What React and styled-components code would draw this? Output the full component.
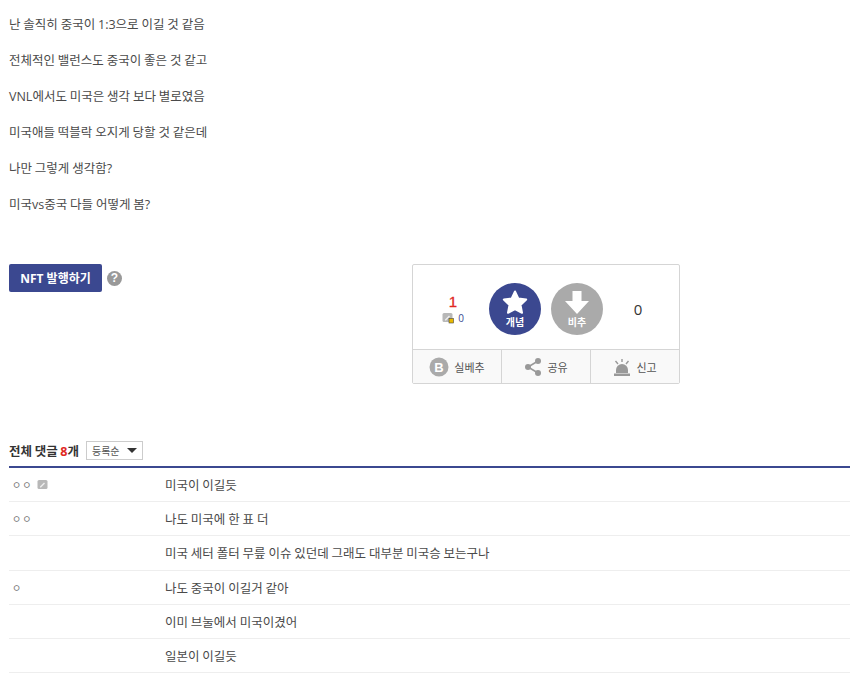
import styled, { createGlobalStyle } from "styled-components";

const GlobalStyle = createGlobalStyle`
  html, body {
    margin: 0;
    padding: 0;
    background: #fff;
    overflow: hidden;
  }
  body {
    font-family: "Open Sans", "Noto Sans CJK KR", sans-serif;
    color: #333;
  }
`;

const Page = styled.div`
  width: 850px;
  height: 674px;
  padding: 7px 0 0 9px;
  box-sizing: border-box;
  overflow: hidden;
`;

const Body = styled.div`
  height: 257px;
`;

const Line = styled.p`
  margin: 0;
  height: 36px;
  line-height: 36px;
  font-size: 12.5px;
  word-spacing: -0.4px;
  color: #4a4a4a;
`;

const Middle = styled.div`
  display: flex;
  align-items: flex-start;
  height: 170px;
`;

const NftArea = styled.div`
  display: flex;
  align-items: center;
  gap: 5px;
  width: 403px;
`;

const NftButton = styled.button`
  width: 93px;
  height: 28px;
  padding: 0;
  border: 0;
  border-radius: 2px;
  background: #3b4890;
  color: #fff;
  font: 700 12px "Open Sans", "Noto Sans CJK KR", sans-serif;
`;

const Help = styled.span`
  width: 15px;
  height: 15px;
  border-radius: 50%;
  background: #999;
  color: #fff;
  font: 700 12px/15px "Liberation Sans", sans-serif;
  text-align: center;
`;

const RecommendBox = styled.div`
  width: 268px;
  height: 120px;
  box-sizing: border-box;
  border: 1px solid #d5d5d5;
  border-radius: 2px;
  display: flex;
  flex-direction: column;
`;

const Votes = styled.div`
  flex: 1;
  display: flex;
  align-items: center;
  padding-top: 3px;
`;

const Count = styled.div`
  width: 76px;
  padding-left: 4px;
  box-sizing: border-box;
  display: flex;
  flex-direction: column;
  align-items: center;
`;

const UpNumber = styled.span`
  font: 400 15px/16px "Liberation Sans", sans-serif;
  -webkit-text-stroke: 0.3px #e0281f;
  color: #e0281f;
  margin-top: 2px;
`;

const Fixed = styled.span`
  display: flex;
  align-items: center;
  gap: 4px;
  font: 10px/14px "Open Sans", sans-serif;
  color: #3b4890;
  margin-top: 1px;
`;

const DownNumber = styled.span`
  width: 70px;
  text-align: center;
  font: 15px "Open Sans", sans-serif;
  color: #333;
`;

const VoteButton = styled.div`
  width: 52px;
  height: 52px;
  border-radius: 50%;
  background: ${(p) => p.$color};
  color: #fff;
  display: flex;
  flex-direction: column;
  align-items: center;
  margin-right: ${(p) => p.$right || 0}px;
  padding-top: 7px;
  box-sizing: border-box;
  font-size: 10px;
  font-weight: 700;
  line-height: 14px;
`;

const Tools = styled.div`
  height: 33px;
  display: flex;
  border-top: 1px solid #d5d5d5;
  background: #f9f9f9;
`;

const Tool = styled.div`
  flex: 1;
  display: flex;
  align-items: center;
  justify-content: center;
  gap: 5px;
  font-size: 11px;
  color: #555;
  padding-top: 1px;
  & + & {
    border-left: 1px solid #d5d5d5;
  }
`;

const CommentHead = styled.div`
  display: flex;
  align-items: center;
  gap: 7px;
  height: 34px;
  border-bottom: 2px solid #3b4890;
  box-sizing: border-box;
`;

const HeadTitle = styled.strong`
  font-size: 12.5px;
  word-spacing: -0.6px;
  color: #333;
  & em {
    font-style: normal;
    color: #e0281f;
  }
`;

const Sort = styled.div`
  width: 57px;
  height: 19px;
  box-sizing: border-box;
  border: 1px solid #ccc;
  display: flex;
  align-items: center;
  justify-content: space-between;
  padding: 0 5px;
  font-size: 10px;
  color: #555;
  &::after {
    content: "";
    border: 5px solid transparent;
    border-top: 5px solid #333;
    border-bottom: 0;
  }
`;

const Row = styled.div`
  display: flex;
  align-items: center;
  height: 34.2px;
  box-sizing: border-box;
  border-bottom: 1px solid #eee;
`;

const Nick = styled.div`
  width: 156px;
  padding-left: 3px;
  box-sizing: border-box;
  display: flex;
  align-items: center;
  gap: 5px;
  font-size: 10px;
  letter-spacing: 1px;
  color: #777;
`;

const Memo = styled.p`
  margin: 0;
  font-size: 12.5px;
  word-spacing: -0.4px;
  color: #4a4a4a;
`;

const GonicIcon = ({ badge }) => (
  <svg width="12" height="12" viewBox="0 0 12 12">
    <rect x="0.5" y="1" width="10" height="9" rx="1.5" fill="#b8b8b8" />
    <path d="M3 7.5 7 3.5 8 4.5 4 8.5H3Z" fill="#eee" />
    {badge && <rect x="7" y="6.5" width="4.5" height="4.5" fill="#e8b800" stroke="#444" strokeWidth="0.6" />}
  </svg>
);

const comments = [
  { nick: "ㅇㅇ", icon: true, text: "미국이 이길듯" },
  { nick: "ㅇㅇ", text: "나도 미국에 한 표 더" },
  { nick: "", text: "미국 세터 폴터 무릎 이슈 있던데 그래도 대부분 미국승 보는구나" },
  { nick: "ㅇ", text: "나도 중국이 이길거 같아" },
  { nick: "", text: "이미 브눌에서 미국이겼어" },
  { nick: "", text: "일본이 이길듯" },
];

const lines = [
  "난 솔직히 중국이 1:3으로 이길 것 같음",
  "전체적인 밸런스도 중국이 좋은 것 같고",
  "VNL에서도 미국은 생각 보다 별로였음",
  "미국애들 떡블락 오지게 당할 것 같은데",
  "나만 그렇게 생각함?",
  "미국vs중국 다들 어떻게 봄?",
];

export default function App() {
  return (
    <Page>
      <GlobalStyle />
      <Body>
        {lines.map((l) => (
          <Line key={l}>{l}</Line>
        ))}
      </Body>
      <Middle>
        <NftArea>
          <NftButton>NFT 발행하기</NftButton>
          <Help>?</Help>
        </NftArea>
        <RecommendBox>
          <Votes>
            <Count>
              <UpNumber>1</UpNumber>
              <Fixed>
                <GonicIcon badge />0
              </Fixed>
            </Count>
            <VoteButton $color="#3b4890" $right={10}>
              <svg width="26" height="25" viewBox="0 0 26 25">
                <path
                  d="M13 1.500 16.400 8.600 24.200 9.600 18.500 15 20 22.800 13 19 6 22.800 7.500 15 1.800 9.600 9.600 8.600Z"
                  fill="#fff"
                  stroke="#fff"
                  strokeWidth="2"
                  strokeLinejoin="round"
                />
              </svg>
              개념
            </VoteButton>
            <VoteButton $color="#aaa">
              <svg width="26" height="25" viewBox="0 0 26 25">
                <path d="M8.500 1H17.500V11H25L13 24 1 11H8.500Z" fill="#fff" />
              </svg>
              비추
            </VoteButton>
            <DownNumber>0</DownNumber>
          </Votes>
          <Tools>
            <Tool>
              <svg width="20" height="20" viewBox="0 0 20 20">
                <circle cx="10" cy="10" r="9.500" fill="#aaa" />
                <text x="10" y="14.500" textAnchor="middle" fontSize="13" fontWeight="700" fontFamily="Liberation Sans" fill="#fff">
                  B
                </text>
              </svg>
              실베추
            </Tool>
            <Tool>
              <svg width="18" height="20" viewBox="0 0 18 20">
                <path d="M14 4 4 10 14 16" fill="none" stroke="#999" strokeWidth="1.600" />
                <circle cx="14" cy="4" r="3" fill="#999" />
                <circle cx="4" cy="10" r="3" fill="#999" />
                <circle cx="14" cy="16" r="3" fill="#999" />
              </svg>
              공유
            </Tool>
            <Tool>
              <svg width="18" height="20" viewBox="0 0 18 20">
                <path d="M3 16V13A6 6 0 0 1 15 13V16Z" fill="#999" />
                <rect x="1" y="16.500" width="16" height="2.500" fill="#999" />
                <path d="M9 2V5M2.500 4 5 7M15.500 4 13 7" stroke="#999" strokeWidth="1.400" />
              </svg>
              신고
            </Tool>
          </Tools>
        </RecommendBox>
      </Middle>
      <CommentHead>
        <HeadTitle>
          전체 댓글 <em>8</em>개
        </HeadTitle>
        <Sort>등록순</Sort>
      </CommentHead>
      {comments.map((c) => (
        <Row key={c.text}>
          <Nick>
            {c.nick}
            {c.icon && <GonicIcon />}
          </Nick>
          <Memo>{c.text}</Memo>
        </Row>
      ))}
    </Page>
  );
}
